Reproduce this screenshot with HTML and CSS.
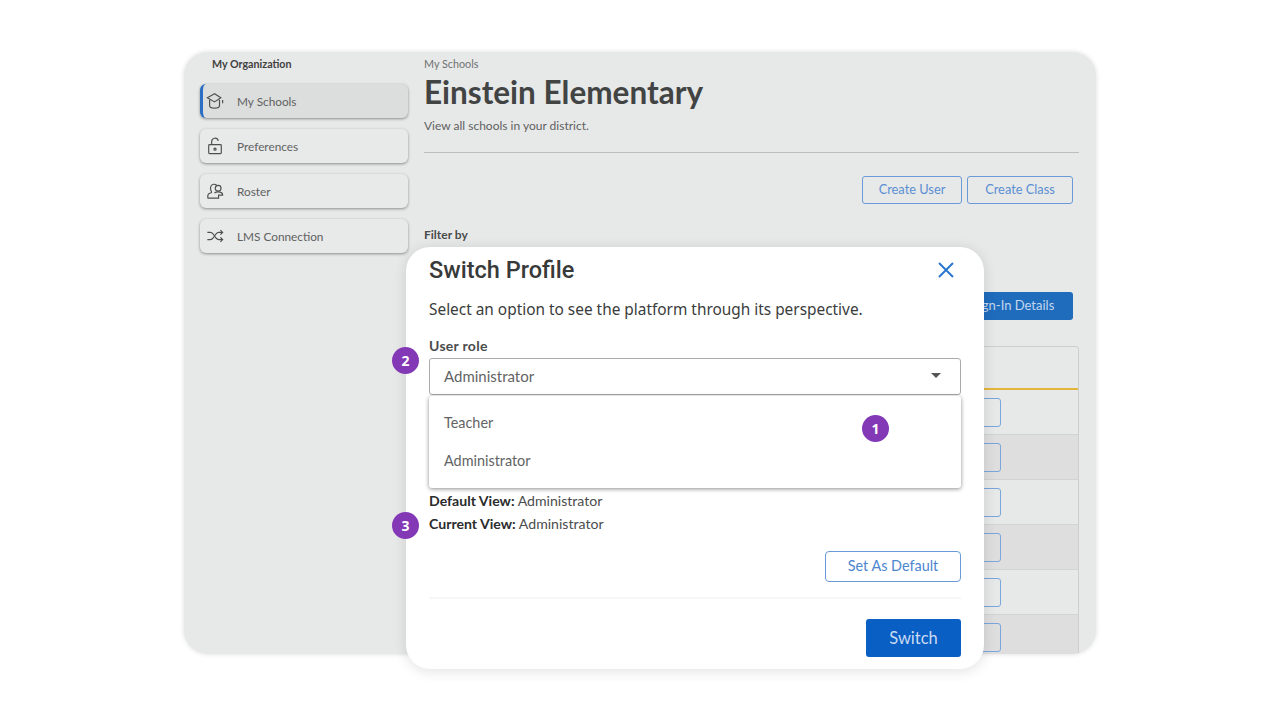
FILE: index.html
```html
<!DOCTYPE html>
<html lang="en">
<head>
    <meta charset="UTF-8">
    <meta name="viewport" content="width=device-width, initial-scale=1.0">
    <title>Switch Profile</title>
    <link rel="stylesheet" href="styles.css">
</head>
<body>
    <div class="stage">
        <div class="app">
            <aside class="sidebar">
                <div class="sidebarTitle">My Organization</div>
                <a class="navItem active">
                    <svg class="navIcon" viewBox="0 0 20 20"><path d="M9.500 2 1.500 6.500 9.500 11l7-4.500-7-4.500Z"/><path d="M4 8.500v6.500c0 1.700 2.400 3 5.500 3s5.500-1.300 5.500-3V8.500"/><path d="M18.500 9v3.500"/></svg>
                    <span>My Schools</span>
                </a>
                <a class="navItem">
                    <svg class="navIcon" viewBox="0 0 20 20"><rect x="3" y="8.500" width="14" height="10" rx="1"/><path d="M6.300 8.500V5a3.700 3.700 0 0 1 7.300-.8"/><circle cx="10" cy="13.500" r="1.200"/></svg>
                    <span>Preferences</span>
                </a>
                <a class="navItem">
                    <svg class="navIcon" viewBox="0 0 20 20"><path d="M2 18v-2.500c0-1.600 1.300-2.900 3-3.300 1-.3 1.400-.9 1-1.700-.8-1-1-2-1-3.200C5 4.200 6.800 2.500 9 2.500c1.300 0 2.400.5 3.100 1.400"/><circle cx="13.500" cy="7" r="3.200"/><path d="M2 18h12v-3.500h4.500c0-2-2-3.500-5-3.500-1.800 0-3 .4-4.200 1.200"/></svg>
                    <span>Roster</span>
                </a>
                <a class="navItem">
                    <svg class="navIcon" viewBox="0 0 20 20"><path d="M1.500 6h3.300c1.500 0 2.300.7 3.200 1.800l3 4.400c.9 1.100 1.700 1.800 3.200 1.800h3.800"/><path d="M1.500 14h3.300c1.500 0 2.300-.7 3.200-1.800l3-4.400C11.900 6.700 12.700 6 14.200 6h3.800"/><path d="M16 3.500 18.500 6 16 8.500M16 11.500l2.500 2.500-2.500 2.500"/></svg>
                    <span>LMS Connection</span>
                </a>
            </aside>
            <main class="content">
                <div class="crumb">My Schools</div>
                <h1 class="pageTitle">Einstein Elementary</h1>
                <p class="pageSub">View all schools in your district.</p>
                <hr class="pageLine">
                <div class="pageActions">
                    <button class="outlineBtn">Create User</button>
                    <button class="outlineBtn">Create Class</button>
                </div>
                <div class="filterLabel">Filter by</div>
                <div class="signInRow">
                    <button class="solidBtn">Sign-In Details</button>
                </div>
                <div class="schoolTable">
                    <div class="tableHead"></div>
                    <div class="tableRow"><span class="rowBtn"></span></div>
                    <div class="tableRow alt"><span class="rowBtn"></span></div>
                    <div class="tableRow"><span class="rowBtn"></span></div>
                    <div class="tableRow alt"><span class="rowBtn"></span></div>
                    <div class="tableRow"><span class="rowBtn"></span></div>
                    <div class="tableRow alt"><span class="rowBtn"></span></div>
                </div>
            </main>
        </div>

        <section class="modal">
            <div class="modalHead">
                <h2>Switch Profile</h2>
                <svg class="closeIcon" viewBox="0 0 18 18"><path d="M2 2l14 14M16 2 2 16"/></svg>
            </div>
            <p class="modalText">Select an option to see the platform through its perspective.</p>
            <label class="fieldLabel">User role</label>
            <div class="selectBox">
                <span>Administrator</span>
                <i class="caret"></i>
            </div>
            <div class="dropdown">
                <div class="option">Teacher</div>
                <div class="option">Administrator</div>
            </div>
            <div class="viewLine"><b>Default View:</b> Administrator</div>
            <div class="viewLine"><b>Current View:</b> Administrator</div>
            <div class="defaultRow">
                <button class="defaultBtn">Set As Default</button>
            </div>
            <hr class="modalLine">
            <div class="switchRow">
                <button class="switchBtn">Switch</button>
            </div>
            <span class="badge badgeOne">1</span>
            <span class="badge badgeTwo">2</span>
            <span class="badge badgeThree">3</span>
        </section>
    </div>
</body>
</html>
```
FILE: styles.css
```css
html, body{
    margin: 0;
    height: 100%;
    overflow: hidden;
}
body{
    background-color: #ffffff;
    font-family: 'Lato', 'Liberation Sans', sans-serif;
    color: #444646;
}
.stage{
    position: relative;
    width: 1280px;
    height: 720px;
    padding-top: 52px;
    box-sizing: border-box;
}
.app{
    display: flex;
    width: 912px;
    height: 602px;
    margin-left: 184px;
    box-sizing: border-box;
    background: #e7e8e8;
    border-radius: 24px;
    overflow: hidden;
    box-shadow: 0 0 5px rgba(0, 0, 0, 0.14);
}

/* left nav */
.sidebar{
    display: flex;
    flex-direction: column;
    width: 240px;
    flex: none;
    box-sizing: border-box;
    padding: 5px 16px 0;
    gap: 11px;
}
.sidebarTitle{
    font-size: 10.700px;
    font-weight: 700;
    line-height: 14px;
    margin: 0 0 2px 12px;
    color: #3f4141;
}
.navItem{
    display: flex;
    align-items: center;
    height: 34px;
    box-sizing: border-box;
    padding-left: 6px;
    gap: 13px;
    font-size: 11.800px;
    color: #606262;
    background: #e8e9e9;
    border-radius: 6px;
    box-shadow: 0 1px 3px rgba(0, 0, 0, 0.4);
}
.navItem.active{
    background: #dcdddd;
    border-left: 3px solid #2a6fc4;
    padding-left: 3px;
}
.navIcon{
    width: 18px;
    height: 18px;
    fill: none;
    stroke: #4e5050;
    stroke-width: 1.3;
}

/* page content */
.content{
    flex: 1;
    box-sizing: border-box;
    padding: 5px 17px 0 0;
    min-width: 0;
}
.crumb{
    font-size: 10.800px;
    line-height: 13px;
    color: #6f7171;
}
.pageTitle{
    margin: 3px 0 0;
    font-size: 31.500px;
    line-height: 38px;
    font-weight: 700;
    color: #424444;
}
.pageSub{
    margin: 8px 0 0;
    font-size: 12px;
    line-height: 14px;
    color: #5f6161;
}
.pageLine{
    margin: 19px 0 0;
    border: 0;
    border-top: 1px solid #bdbfbf;
}
.pageActions{
    display: flex;
    justify-content: flex-end;
    gap: 5px;
    margin: 23px 6px 0 0;
}
.outlineBtn{
    height: 28px;
    width: 100px;
    padding: 0 0 2px;
    font-family: inherit;
    font-size: 12.800px;
    color: #5a8fd3;
    background: transparent;
    border: 1px solid #6a9bd8;
    border-radius: 3px;
}
.outlineBtn:last-child{
    width: 106px;
}
.filterLabel{
    margin-top: 24px;
    font-size: 12px;
    font-weight: 700;
    line-height: 14px;
    color: #4a4c4c;
}
.signInRow{
    display: flex;
    justify-content: flex-end;
    margin: 50px 6px 0 0;
}
.solidBtn{
    height: 28px;
    width: 130px;
    padding: 0 0 2px 10px;
    font-family: inherit;
    font-size: 13px;
    color: #c3d6ee;
    background: #1f6cbd;
    border: 0;
    border-radius: 3px;
}
.schoolTable{
    margin-top: 26px;
    border: 1px solid #cdcfcf;
    border-radius: 3px 3px 0 0;
}
.tableHead{
    height: 41px;
    border-bottom: 2px solid #e3b53a;
}
.tableRow{
    display: flex;
    align-items: center;
    justify-content: flex-end;
    height: 44px;
    padding-right: 77px;
    border-bottom: 1px solid #d2d3d3;
}
.tableRow.alt{
    background: #dedede;
}
.rowBtn{
    width: 60px;
    height: 27px;
    border: 1px solid #7ba6dc;
    border-radius: 3px;
}

/* modal */
.modal{
    position: absolute;
    left: 406px;
    top: 247px;
    width: 578px;
    height: 422px;
    box-sizing: border-box;
    padding: 10px 23px 0;
    background: #ffffff;
    border-radius: 24px;
    box-shadow: 0 2px 14px rgba(0, 0, 0, 0.12);
    font-family: 'Noto Sans', sans-serif;
}
.modalHead{
    display: flex;
    align-items: center;
    justify-content: space-between;
    height: 26px;
}
.modalHead h2{
    margin: 0;
    font-family: 'Roboto', sans-serif;
    font-size: 23.500px;
    font-weight: 500;
    color: #383a3a;
}
.closeIcon{
    width: 18px;
    height: 18px;
    margin-right: 6px;
    fill: none;
    stroke: #2a77d0;
    stroke-width: 2;
}
.modalText{
    margin: 16px 0 0;
    font-size: 15.400px;
    line-height: 22px;
    color: #3a3c3c;
}
.fieldLabel{
    display: block;
    margin-top: 17px;
    font-family: 'Lato', sans-serif;
    font-size: 14px;
    font-weight: 700;
    letter-spacing: 0.3px;
    line-height: 16px;
    color: #4a4c4c;
}
.selectBox{
    display: flex;
    align-items: center;
    justify-content: space-between;
    height: 37px;
    margin-top: 4px;
    box-sizing: border-box;
    padding: 0 19px 2px 14px;
    font-family: 'Lato', sans-serif;
    font-size: 15px;
    color: #626464;
    border: 1px solid #a9abab;
    border-radius: 3px;
}
.caret{
    width: 0;
    height: 0;
    border-left: 5px solid transparent;
    border-right: 5px solid transparent;
    border-top: 5px solid #555757;
}
.dropdown{
    height: 92px;
    margin-top: 1px;
    box-sizing: border-box;
    padding-top: 8px;
    font-family: 'Lato', sans-serif;
    font-size: 14.400px;
    color: #626464;
    background: #ffffff;
    border-radius: 3px;
    box-shadow: 0 1px 4px rgba(0, 0, 0, 0.45);
}
.option{
    height: 38px;
    line-height: 38px;
    padding-left: 15px;
}
.viewLine{
    height: 23px;
    line-height: 23px;
    font-family: 'Lato', sans-serif;
    font-size: 14.100px;
    color: #4a4c4c;
}
.viewLine b{
    color: #2a2c2c;
}
.dropdown + .viewLine{
    margin-top: 1px;
}
.defaultRow{
    display: flex;
    justify-content: flex-end;
    margin-top: 16px;
}
.defaultBtn{
    width: 136px;
    height: 31px;
    padding: 0 0 2px;
    font-family: 'Lato', sans-serif;
    font-size: 14.400px;
    color: #4c86cf;
    background: #ffffff;
    border: 1px solid #6a9bd8;
    border-radius: 4px;
}
.modalLine{
    margin: 15px 0 0;
    border: 0;
    border-top: 2px solid #f7f7f7;
}
.switchRow{
    display: flex;
    justify-content: flex-end;
    margin-top: 20px;
}
.switchBtn{
    width: 95px;
    height: 38px;
    padding: 0;
    font-family: 'Lato', sans-serif;
    font-size: 16.500px;
    color: #c9dbf2;
    background: #0a5fc4;
    border: 0;
    border-radius: 3px;
}
.badge{
    position: absolute;
    width: 27px;
    height: 27px;
    line-height: 27px;
    text-align: center;
    font-family: 'Noto Sans', sans-serif;
    font-size: 14px;
    font-weight: 700;
    color: #ffffff;
    background: #8338b5;
    border-radius: 50%;
}
.badgeOne{
    left: 456px;
    top: 168px;
}
.badgeTwo{
    left: -14px;
    top: 100px;
}
.badgeThree{
    left: -14px;
    top: 265px;
}
```
